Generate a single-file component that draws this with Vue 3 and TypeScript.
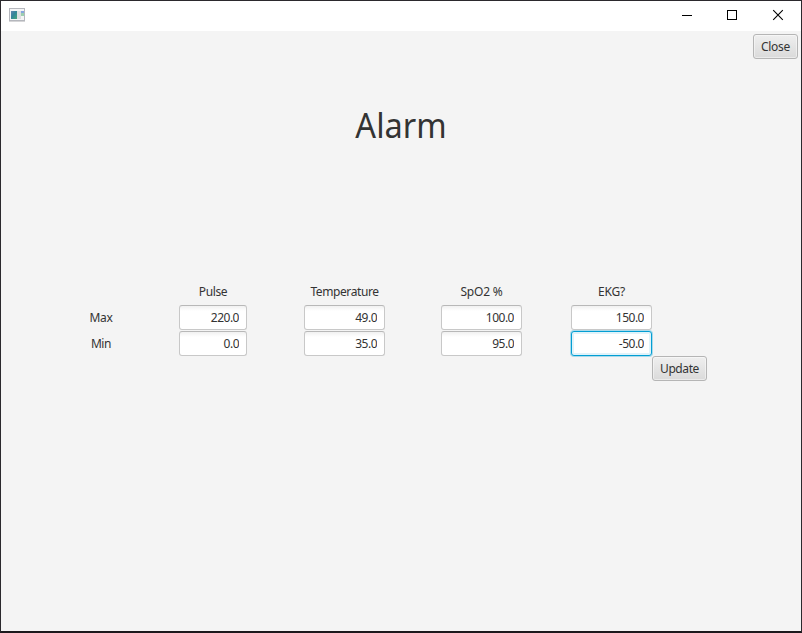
<script setup lang="ts">
import { ref } from 'vue'

interface Limit {
  label: string
  max: string
  min: string
}

const limits = ref<Limit[]>([
  { label: 'Pulse', max: '220.0', min: '0.0' },
  { label: 'Temperature', max: '49.0', min: '35.0' },
  { label: 'SpO2 %', max: '100.0', min: '95.0' },
  { label: 'EKG?', max: '150.0', min: '-50.0' },
])
</script>

<template>
  <div class="window">
    <header class="titlebar">
      <svg class="app-icon" width="16" height="14" viewBox="0 0 16 14" shape-rendering="crispEdges">
        <defs>
          <linearGradient id="pane" x1="0" y1="0" x2="1" y2="1">
            <stop offset="0" stop-color="#6585b0" />
            <stop offset="0.45" stop-color="#34859a" />
            <stop offset="1" stop-color="#48a879" />
          </linearGradient>
        </defs>
        <rect width="16" height="14" fill="#d5d5d7" />
        <rect x="0.5" y="0.5" width="15" height="12" fill="#f5f5f6" stroke="#b5b7bd" />
        <rect x="2" y="3" width="6" height="8" fill="url(#pane)" />
        <rect x="8" y="3" width="4" height="8" fill="#dedfe1" />
        <rect x="12" y="3" width="3" height="2" fill="#86a5df" />
        <rect x="12" y="5" width="3" height="3" fill="#9bcfaf" />
      </svg>
      <div class="controls">
        <svg width="46" height="30" viewBox="0 0 46 30" shape-rendering="crispEdges">
          <path d="M19 14.5H29" stroke="#000" />
        </svg>
        <svg width="46" height="30" viewBox="0 0 46 30" shape-rendering="crispEdges">
          <rect x="18.5" y="9.5" width="9" height="9" fill="none" stroke="#000" />
        </svg>
        <svg width="46" height="30" viewBox="0 0 46 30">
          <path d="M18.2 9.2L27.8 18.8M27.8 9.2L18.2 18.8" stroke="#000" stroke-width="1.1" />
        </svg>
      </div>
    </header>

    <main class="content">
      <div class="top-actions">
        <button class="btn btn-close" type="button">Close</button>
      </div>
      <h1 class="title">Alarm</h1>

      <div class="limits">
        <div class="names">
          <span class="cell"></span>
          <span class="cell">Max</span>
          <span class="cell">Min</span>
        </div>
        <div v-for="(limit, i) in limits" :key="limit.label" class="column" :class="`column-${i}`">
          <span class="cell">{{ limit.label }}</span>
          <input v-model="limit.max" class="field" type="text" />
          <input v-model="limit.min" class="field" :class="{ focused: i === 3 }" type="text" />
        </div>
        <button class="btn btn-update" type="button">Update</button>
      </div>
    </main>
  </div>
</template>

<style>
body {
  margin: 0;
  overflow: hidden;
}
</style>

<style scoped>
.window {
  box-sizing: border-box;
  width: 802px;
  height: 633px;
  display: flex;
  flex-direction: column;
  border: 1px solid #2b292d;
  border-bottom: 2px solid #1c191d;
  background: #f4f4f4;
  color: #333;
  font-family: "Noto Sans", "Open Sans", sans-serif;
  font-size: 12px;
}

.titlebar {
  height: 30px;
  flex: none;
  display: flex;
  justify-content: space-between;
  background: #fff;
}

.app-icon {
  margin: 7px 0 0 8px;
}

.controls {
  display: flex;
}

.controls svg {
  display: block;
}

.content {
  flex: 1;
  display: flex;
  flex-direction: column;
}

.top-actions {
  display: flex;
  justify-content: flex-end;
  padding: 3px 3px 0 0;
}

.btn {
  box-sizing: border-box;
  height: 25px;
  padding: 0;
  border: 1px solid #b5b5b5;
  border-radius: 3px;
  background: linear-gradient(#efefef, #dadada);
  box-shadow: inset 0 0 0 1px rgba(255, 255, 255, 0.45);
  color: #333;
  font: inherit;
  line-height: 23px;
}

.btn-close {
  width: 45px;
  letter-spacing: -0.3px;
}

.btn-update {
  width: 55px;
  align-self: flex-end;
  letter-spacing: -0.4px;
}

.title {
  margin: 42px 0 0;
  height: 49px;
  line-height: 48px;
  font-size: 35px;
  font-weight: 400;
  text-align: center;
  transform: scaleX(0.93);
}

.limits {
  display: flex;
  margin: 129px 0 0 78px;
  height: 102px;
}

.names,
.column {
  display: grid;
  grid-template-rows: 25px 25px 25px;
  row-gap: 1px;
  align-content: start;
}

.names {
  width: 44px;
  margin-right: 56px;
}

.column {
  width: 81px;
}

.column-0 {
  width: 68px;
  margin-right: 57px;
}

.column-1 {
  margin-right: 56px;
}

.column-2 {
  margin-right: 49px;
}

.cell {
  line-height: 25px;
  text-align: center;
  white-space: nowrap;
  letter-spacing: -0.4px;
}

.column-2 .cell,
.column-3 .cell {
  letter-spacing: -0.2px;
}

.field {
  box-sizing: border-box;
  width: 100%;
  height: 25px;
  padding: 0 7px 0 5px;
  border: 1px solid #c8c8c8;
  border-top-color: #b8b8b8;
  border-radius: 3px;
  outline: none;
  background: linear-gradient(#f1f1f1, #fff 5px);
  color: #333;
  font: inherit;
  letter-spacing: -0.5px;
  text-align: right;
}

.focused {
  position: relative;
  border-color: #039ed3;
  background: #fff;
  box-shadow: 0 0 0 1px rgba(3, 158, 211, 0.3), inset 0 0 0 2px rgba(3, 158, 211, 0.12);
}
</style>
